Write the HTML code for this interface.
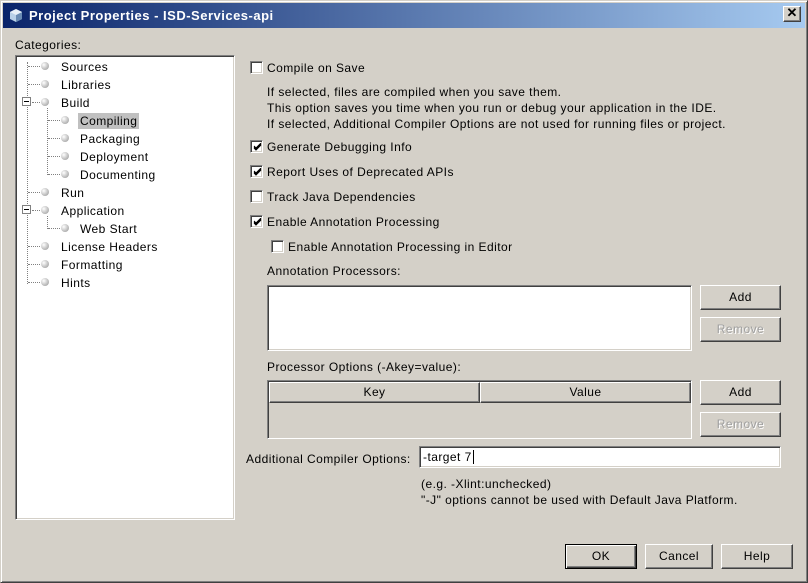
<!DOCTYPE html>
<html><head><meta charset="utf-8"><style>
*{margin:0;padding:0;box-sizing:border-box}
body{width:808px;height:583px;background:#d4d0c8;font-family:"Liberation Sans",sans-serif;font-size:12px;color:#000;position:relative;overflow:hidden;letter-spacing:0.45px}
.a{position:absolute;white-space:nowrap}
.win{position:absolute;left:0;top:0;width:808px;height:583px;border:1px solid;border-color:#d4d0c8 #404040 #404040 #d4d0c8;box-shadow:inset 1px 1px 0 #fff,inset -1px -1px 0 #808080}
.title{position:absolute;left:3px;top:3px;width:802px;height:25px;background:linear-gradient(to right,#0a246a,#a6caf0);color:#fff;font-weight:bold;font-size:13px;letter-spacing:0.5px}
.cb{position:absolute;width:13px;height:13px;background:#fff;border:1px solid;border-color:#808080 #fff #fff #808080;box-shadow:inset 1px 1px 0 #404040,inset -1px -1px 0 #d4d0c8}
.cb svg{position:absolute;left:2px;top:2px}
.sunk{position:absolute;background:#fff;border:1px solid;border-color:#808080 #fff #fff #808080;box-shadow:inset 1px 1px 0 #404040,inset -1px -1px 0 #d4d0c8}
.btn{position:absolute;background:#d4d0c8;border:1px solid;border-color:#fff #404040 #404040 #fff;box-shadow:inset -1px -1px 0 #808080;text-align:center;line-height:22px}
.dis{color:#a0a0a0;text-shadow:1px 1px 0 #fff}
.dot{position:absolute;width:8px;height:8px;border-radius:50%;background:radial-gradient(circle at 35% 35%,#fff,#909090)}
.hl{position:absolute;border-top:1px dotted #808080;height:0}
.vl{position:absolute;border-left:1px dotted #808080;width:0}
</style></head><body>
<div class="win"></div>
<div class="title">
<svg style="position:absolute;left:6px;top:5px" width="14" height="15" viewBox="0 0 14 15"><path d="M7 1L13 4V11L7 14L1 11V4Z" fill="#b8d0e8"/><path d="M7 7L13 4V11L7 14Z" fill="#6a8cb4"/><path d="M1 4L7 1L13 4L7 7Z" fill="#e8f0f8"/></svg>
<span class="a" style="left:26px;top:5px">Project Properties - ISD-Services-api</span>
<div class="btn" style="left:780px;top:3px;width:18px;height:16px;line-height:12px;font-size:13px;color:#000;letter-spacing:0">✕</div>
</div>
<span class="a" style="left:15px;top:38px">Categories:</span>
<div class="sunk" style="left:15px;top:55px;width:220px;height:465px"></div>
<div class="vl" style="left:27px;top:62px;height:222px"></div>
<div class="vl" style="left:47px;top:108px;height:67px"></div>
<div class="vl" style="left:47px;top:216px;height:13px"></div>
<div class="a" style="left:22px;top:97px;width:9px;height:9px;border:1px solid #808080;background:#fff"></div><div class="a" style="left:24px;top:101px;width:5px;height:1px;background:#000"></div>
<div class="a" style="left:22px;top:205px;width:9px;height:9px;border:1px solid #808080;background:#fff"></div><div class="a" style="left:24px;top:209px;width:5px;height:1px;background:#000"></div>
<div class="hl" style="left:28px;top:66px;width:12px"></div><div class="dot" style="left:41px;top:62px"></div><span class="a" style="left:61px;top:60px">Sources</span>
<div class="hl" style="left:28px;top:84px;width:12px"></div><div class="dot" style="left:41px;top:80px"></div><span class="a" style="left:61px;top:78px">Libraries</span>
<div class="hl" style="left:32px;top:102px;width:8px"></div><div class="dot" style="left:41px;top:98px"></div><span class="a" style="left:61px;top:96px">Build</span>
<div class="hl" style="left:48px;top:120px;width:12px"></div><div class="dot" style="left:61px;top:116px"></div><span class="a" style="left:78px;top:113px;background:#c0c0c0;padding:1px 2px">Compiling</span>
<div class="hl" style="left:48px;top:138px;width:12px"></div><div class="dot" style="left:61px;top:134px"></div><span class="a" style="left:80px;top:132px">Packaging</span>
<div class="hl" style="left:48px;top:156px;width:12px"></div><div class="dot" style="left:61px;top:152px"></div><span class="a" style="left:80px;top:150px">Deployment</span>
<div class="hl" style="left:48px;top:174px;width:12px"></div><div class="dot" style="left:61px;top:170px"></div><span class="a" style="left:80px;top:168px">Documenting</span>
<div class="hl" style="left:28px;top:192px;width:12px"></div><div class="dot" style="left:41px;top:188px"></div><span class="a" style="left:61px;top:186px">Run</span>
<div class="hl" style="left:32px;top:210px;width:8px"></div><div class="dot" style="left:41px;top:206px"></div><span class="a" style="left:61px;top:204px">Application</span>
<div class="hl" style="left:48px;top:228px;width:12px"></div><div class="dot" style="left:61px;top:224px"></div><span class="a" style="left:80px;top:222px">Web Start</span>
<div class="hl" style="left:28px;top:246px;width:12px"></div><div class="dot" style="left:41px;top:242px"></div><span class="a" style="left:61px;top:240px">License Headers</span>
<div class="hl" style="left:28px;top:264px;width:12px"></div><div class="dot" style="left:41px;top:260px"></div><span class="a" style="left:61px;top:258px">Formatting</span>
<div class="hl" style="left:28px;top:282px;width:12px"></div><div class="dot" style="left:41px;top:278px"></div><span class="a" style="left:61px;top:276px">Hints</span>
<div class="cb" style="left:250px;top:61px"></div><span class="a" style="left:267px;top:61px">Compile on Save</span>
<span class="a" style="left:267px;top:85px">If selected, files are compiled when you save them.</span>
<span class="a" style="left:267px;top:101px">This option saves you time when you run or debug your application in the IDE.</span>
<span class="a" style="left:267px;top:117px">If selected, Additional Compiler Options are not used for running files or project.</span>
<div class="cb" style="left:250px;top:140px"><svg width="9" height="9" viewBox="0 0 9 9"><path d="M1 4L3 6L8 1M1 5L3 7L8 2M1 3L3 5L8 0" stroke="#000" fill="none"/></svg></div><span class="a" style="left:267px;top:140px">Generate Debugging Info</span>
<div class="cb" style="left:250px;top:165px"><svg width="9" height="9" viewBox="0 0 9 9"><path d="M1 4L3 6L8 1M1 5L3 7L8 2M1 3L3 5L8 0" stroke="#000" fill="none"/></svg></div><span class="a" style="left:267px;top:165px">Report Uses of Deprecated APIs</span>
<div class="cb" style="left:250px;top:190px"></div><span class="a" style="left:267px;top:190px">Track Java Dependencies</span>
<div class="cb" style="left:250px;top:215px"><svg width="9" height="9" viewBox="0 0 9 9"><path d="M1 4L3 6L8 1M1 5L3 7L8 2M1 3L3 5L8 0" stroke="#000" fill="none"/></svg></div><span class="a" style="left:267px;top:215px">Enable Annotation Processing</span>
<div class="cb" style="left:271px;top:240px"></div><span class="a" style="left:288px;top:240px">Enable Annotation Processing in Editor</span>
<span class="a" style="left:267px;top:264px">Annotation Processors:</span>
<div class="sunk" style="left:267px;top:285px;width:425px;height:66px"></div>
<div class="btn" style="left:700px;top:285px;width:81px;height:25px">Add</div>
<div class="btn dis" style="left:700px;top:317px;width:81px;height:25px">Remove</div>
<span class="a" style="left:267px;top:360px">Processor Options (-Akey=value):</span>
<div class="a" style="left:267px;top:380px;width:425px;height:59px;border:1px solid;border-color:#808080 #fff #fff #808080;box-shadow:inset 1px 1px 0 #404040"></div>
<div class="btn" style="left:269px;top:382px;width:211px;height:21px;line-height:19px">Key</div>
<div class="btn" style="left:480px;top:382px;width:211px;height:21px;line-height:19px">Value</div>
<div class="btn" style="left:700px;top:380px;width:81px;height:25px">Add</div>
<div class="btn dis" style="left:700px;top:412px;width:81px;height:25px">Remove</div>
<span class="a" style="left:246px;top:452px">Additional Compiler Options:</span>
<div class="sunk" style="left:419px;top:446px;width:362px;height:22px"><span class="a" style="left:3px;top:3px">-target 7<span style="border-left:1px solid #000;margin-left:1px"></span></span></div>
<span class="a" style="left:421px;top:477px">(e.g. -Xlint:unchecked)</span>
<span class="a" style="left:421px;top:493px">"-J" options cannot be used with Default Java Platform.</span>
<div class="btn" style="left:565px;top:544px;width:72px;height:25px;border:1px solid #000;box-shadow:inset 1px 1px 0 #fff,inset -1px -1px 0 #404040,inset -2px -2px 0 #808080">OK</div>
<div class="btn" style="left:645px;top:544px;width:68px;height:25px">Cancel</div>
<div class="btn" style="left:721px;top:544px;width:72px;height:25px">Help</div>
</body></html>
